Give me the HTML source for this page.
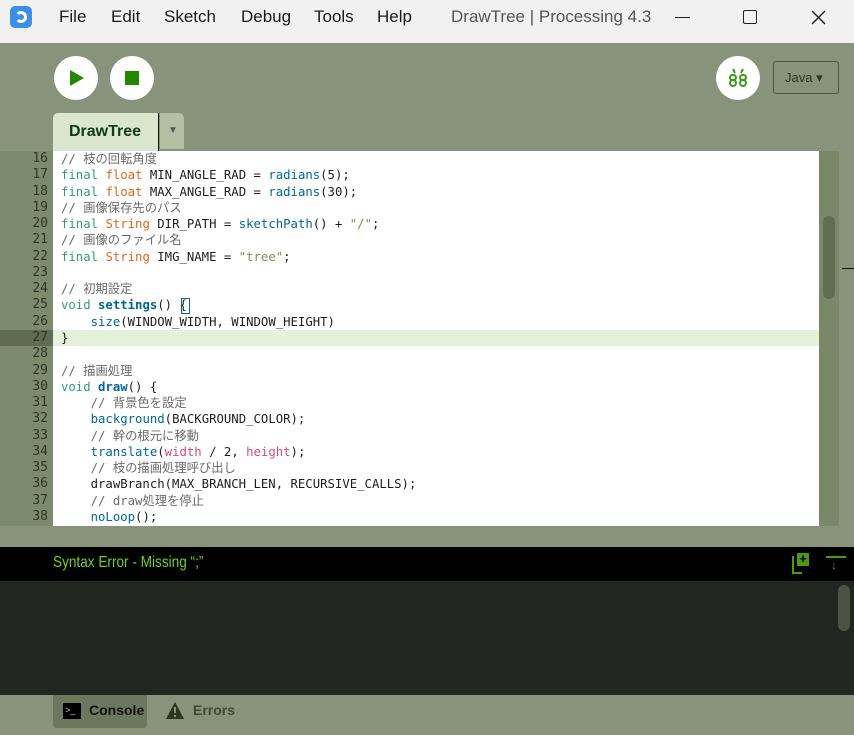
<!DOCTYPE html>
<html><head><meta charset="utf-8"><style>
*{margin:0;padding:0;box-sizing:border-box}
body{width:854px;height:735px;overflow:hidden;background:#87937a;font-family:"Liberation Sans","Noto Sans CJK JP",sans-serif;position:relative}
.abs{position:absolute}
#title{left:0;top:0;width:854px;height:43px;background:#f1f1f1}
.menu{top:7px;font-size:17px;color:#1a1a1a}
.circ{width:44px;height:44px;border-radius:50%;background:#fff}
#code{left:53px;top:151px;width:766px;height:375px;background:#fff;overflow:hidden}
#gut{left:0;top:151px;width:53px;height:375px;background:#7c8a6e}
.ln{position:absolute;left:0;width:48px;height:16px;line-height:16px;text-align:right;font:13px/16px "DejaVu Sans Mono",monospace;color:#2e3526}
.cl{position:absolute;left:8px;height:16px;white-space:pre;font:12.3px/16px "DejaVu Sans Mono","Noto Sans CJK JP",monospace;color:#1e1e1e}
.cl span{line-height:16px}
.c{color:#6a6a6a}.k{color:#33997e}.t{color:#e2661a}.f{color:#006699}.b{color:#006699;font-weight:bold}.s{color:#7d8f5a}.p{color:#d94a7a}
</style></head><body>
<div id="title" class="abs">
 <div class="abs" style="left:10px;top:6px;width:22px;height:22px;border-radius:5px;background:#3b8fe8"></div>
 <div class="abs" style="left:15px;top:11px;width:12px;height:12px;border:3px solid #fff;border-left-color:transparent;border-radius:50%"></div>
 <span class="abs menu" style="left:59px">File</span>
 <span class="abs menu" style="left:111px">Edit</span>
 <span class="abs menu" style="left:164px">Sketch</span>
 <span class="abs menu" style="left:241px">Debug</span>
 <span class="abs menu" style="left:314px">Tools</span>
 <span class="abs menu" style="left:377px">Help</span>
 <span class="abs menu" style="left:451px;color:#555">DrawTree | Processing 4.3</span>
 <div class="abs" style="left:675px;top:17px;width:15px;height:1px;background:#222"></div>
 <div class="abs" style="left:743px;top:10px;width:14px;height:14px;border:1.5px solid #222;border-radius:2px"></div>
 <svg class="abs" style="left:811px;top:10px" width="15" height="15"><path d="M1 1L14 14M14 1L1 14" stroke="#222" stroke-width="1.5"/></svg>
</div>
<div class="abs circ" style="left:54px;top:56px"></div>
<svg class="abs" style="left:70px;top:70px" width="14" height="16"><path d="M0 0L14 8L0 16Z" fill="#228800"/></svg>
<div class="abs circ" style="left:110px;top:56px"></div>
<div class="abs" style="left:125px;top:71px;width:14px;height:14px;background:#228800"></div>
<div class="abs circ" style="left:716px;top:56px"></div>
<svg class="abs" style="left:727px;top:67px" width="22" height="22" fill="none" stroke="#3a9a1a" stroke-width="2"><path d="M6 2L8 6M16 2L14 6"/><rect x="3" y="8" width="6" height="5" rx="2.5"/><rect x="3" y="13" width="6" height="6" rx="3"/><rect x="13" y="8" width="6" height="5" rx="2.5"/><rect x="13" y="13" width="6" height="6" rx="3"/></svg>
<div class="abs" style="left:773px;top:61px;width:66px;height:33px;border:1px solid #4b573f;border-radius:3px;font-size:13px;color:#2e3526;padding:8px 0 0 11px">Java ▾</div>
<div class="abs" style="left:53px;top:113px;width:106px;height:38px;background:#dbe6d1;border-radius:5px 0 0 0;font-size:16px;font-weight:bold;color:#0e3a12;padding:10px 0 0 16px">DrawTree</div>
<div class="abs" style="left:158px;top:113px;width:1px;height:38px;background:#111"></div>
<div class="abs" style="left:160px;top:113px;width:24px;height:36px;background:#b3c0a4;border-radius:0 5px 0 0;font-size:10px;color:#555;padding:12px 0 0 8px">▼</div>
<div id="gut" class="abs">
 <div class="abs" style="left:0;top:179px;width:53px;height:16px;background:#5f6b52"></div>
</div>
<div id="code" class="abs">
 <div class="abs" style="left:0;top:179px;width:766px;height:16px;background:#e5f1da"></div>
 <div class="abs" style="left:128px;top:147px;width:9px;height:16px;border:1.3px solid #006699"></div>
</div>
<div class="abs" style="left:819px;top:151px;width:20px;height:375px;background:#7a8769"></div>
<div class="abs" style="left:823px;top:216px;width:12px;height:83px;background:#5f6e50;border-radius:6px"></div>
<div class="abs" style="left:842px;top:268px;width:12px;height:1px;background:#111"></div>
<div class="abs" style="left:0;top:547px;width:854px;height:34px;background:#000"></div>
<span class="abs" style="left:53px;top:554px;font-size:16px;color:#6fd21e;transform:scaleX(.85);transform-origin:left">Syntax Error - Missing “;”</span>
<div class="abs" style="left:792px;top:556px;width:10px;height:18px;border-left:2px solid #4a9a12;border-bottom:2px solid #4a9a12"></div>
<div class="abs" style="left:797px;top:553px;width:12px;height:13px;background:#4a9a12;color:#000;font-size:13px;font-weight:bold;line-height:12px;text-align:center">+</div>
<div class="abs" style="left:826px;top:556px;width:20px;height:2px;background:#4a9a12"></div>
<span class="abs" style="left:831px;top:558px;font-size:12px;color:#4a9a12">↓</span>
<div class="abs" style="left:0;top:581px;width:854px;height:114px;background:#212620"></div>
<div class="abs" style="left:838px;top:585px;width:12px;height:46px;background:#4b5244;border-radius:6px"></div>
<div class="abs" style="left:53px;top:695px;width:94px;height:33px;background:#6b785e;border-radius:0 0 4px 4px"></div>
<div class="abs" style="left:63px;top:703px;width:18px;height:16px;background:#000;color:#ccc;font-size:9px;padding:2px 0 0 2px">&gt;_</div>
<span class="abs" style="left:89px;top:702px;font-size:14px;font-weight:bold;color:#111">Console</span>
<svg class="abs" style="left:166px;top:702px" width="18" height="17"><path d="M9 0L18 17H0Z" fill="#2e3526"/><rect x="8" y="5" width="2" height="6" fill="#87937a"/><rect x="8" y="13" width="2" height="2" fill="#87937a"/></svg>
<span class="abs" style="left:193px;top:702px;font-size:14px;font-weight:bold;color:#3e4a34">Errors</span>
<script>
var L=[
'<span class="c">// 枝の回転角度</span>',
'<span class="k">final</span> <span class="t">float</span> MIN_ANGLE_RAD = <span class="f">radians</span>(5);',
'<span class="k">final</span> <span class="t">float</span> MAX_ANGLE_RAD = <span class="f">radians</span>(30);',
'<span class="c">// 画像保存先のパス</span>',
'<span class="k">final</span> <span class="t">String</span> DIR_PATH = <span class="f">sketchPath</span>() + <span class="s">"/"</span>;',
'<span class="c">// 画像のファイル名</span>',
'<span class="k">final</span> <span class="t">String</span> IMG_NAME = <span class="s">"tree"</span>;',
'',
'<span class="c">// 初期設定</span>',
'<span class="k">void</span> <span class="b">settings</span>() {',
'    <span class="f">size</span>(WINDOW_WIDTH, WINDOW_HEIGHT)',
'}',
'',
'<span class="c">// 描画処理</span>',
'<span class="k">void</span> <span class="b">draw</span>() {',
'    <span class="c">// 背景色を設定</span>',
'    <span class="f">background</span>(BACKGROUND_COLOR);',
'    <span class="c">// 幹の根元に移動</span>',
'    <span class="f">translate</span>(<span class="p">width</span> / 2, <span class="p">height</span>);',
'    <span class="c">// 枝の描画処理呼び出し</span>',
'    drawBranch(MAX_BRANCH_LEN, RECURSIVE_CALLS);',
'    <span class="c">// draw処理を停止</span>',
'    <span class="f">noLoop</span>();'];
var g=document.getElementById('gut'),c=document.getElementById('code'),h='',k='';
for(var i=0;i<L.length;i++){var y=i*16.27;
h+='<div class="ln" style="top:'+y+'px">'+(16+i)+'</div>';
k+='<div class="cl" style="top:'+y+'px">'+L[i]+'</div>';}
g.insertAdjacentHTML('beforeend',h);c.insertAdjacentHTML('beforeend',k);
</script>
</body></html>
